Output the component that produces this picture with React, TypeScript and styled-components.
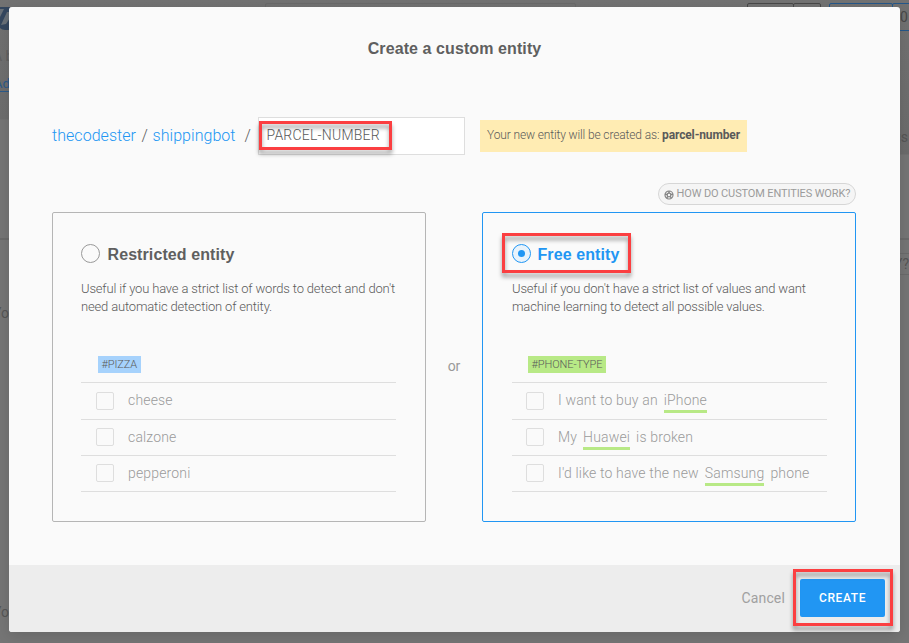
import React from "react";
import styled, { createGlobalStyle } from "styled-components";

const BLUE = "#2196f3";
const RED = "#fb3f41";

const GlobalStyle = createGlobalStyle`
  * { box-sizing: border-box; }
  body {
    margin: 0;
    overflow: hidden;
    background: #757575;
    color: #5a5a5a;
    font-family: Roboto, "Liberation Sans", sans-serif;
    font-weight: 300;
  }
`;

const Page = styled.div`
  position: relative;
  width: 909px;
  height: 643px;
  overflow: hidden;
  background:
    linear-gradient(#727272, #6c6c6c 119px, #757575 120px) 0 0 / 9px 100% no-repeat,
    linear-gradient(#727272, #6b6b6b 154px, #757575 155px);
`;

const Behind = styled.div<{ $x: number; $y: number; $size?: number; $color?: string; $underline?: boolean }>`
  position: absolute;
  left: ${(p) => p.$x}px;
  top: ${(p) => p.$y}px;
  font-size: ${(p) => p.$size ?? 14}px;
  line-height: 14px;
  white-space: nowrap;
  font-weight: 400;
  color: ${(p) => p.$color ?? "#555"};
  border-bottom: ${(p) => (p.$underline ? "1px solid #2b5a8a" : "0")};
`;

const BehindBox = styled.div<{ $x: number; $y: number; $w: number; $h: number; $color: string; $r?: number }>`
  position: absolute;
  left: ${(p) => p.$x}px;
  top: ${(p) => p.$y}px;
  width: ${(p) => p.$w}px;
  height: ${(p) => p.$h}px;
  border: 1px solid ${(p) => p.$color};
  border-radius: ${(p) => p.$r ?? 2}px;
`;

const Avatar = styled.svg`
  position: absolute;
  left: 0;
  top: 7px;
  width: 10px;
  height: 23px;
`;

const Dialog = styled.main`
  position: absolute;
  left: 9px;
  top: 7px;
  width: 891px;
  height: 625px;
  display: flex;
  flex-direction: column;
  background: #fafafa;
  border-radius: 3px;
  box-shadow: 0 4px 14px rgba(0, 0, 0, 0.12);
  overflow: hidden;
`;

const Title = styled.h1`
  margin: 32px 0 0;
  font: bold 16px/20px "Liberation Sans", Arial, sans-serif;
  letter-spacing: 0.09px;
  text-align: center;
  color: #5f5f5f;
`;

const NameRow = styled.div`
  display: flex;
  align-items: center;
  margin: 58px 0 0 43px;
  height: 38px;
`;

const Crumb = styled.a<{ $w: number }>`
  width: ${(p) => p.$w}px;
  font-size: 16px;
  line-height: 20px;
  letter-spacing: 0.05px;
  color: ${BLUE};
  white-space: nowrap;
`;

const Slash = styled.span<{ $w: number }>`
  width: ${(p) => p.$w}px;
  font-size: 16px;
  line-height: 20px;
`;

const NameField = styled.div`
  width: 207px;
  height: 38px;
  padding: 8px 7.5px;
  border: 1px solid #dedede;
  background: #fff;
  font-size: 14px;
  line-height: 18px;
  letter-spacing: 0.22px;
`;

const Highlight = styled.div<{ $x: number; $y: number; $w: number; $h: number }>`
  position: absolute;
  left: ${(p) => p.$x}px;
  top: ${(p) => p.$y}px;
  width: ${(p) => p.$w}px;
  height: ${(p) => p.$h}px;
  border: 3px solid ${RED};
  pointer-events: none;
  filter: drop-shadow(0 4px 2px rgba(0, 0, 0, 0.38));
`;

const Notice = styled.div`
  width: 267px;
  height: 32px;
  margin-left: 15px;
  padding-left: 7px;
  background: #ffecb3;
  font-size: 12px;
  line-height: 30px;
  letter-spacing: -0.135px;
  white-space: nowrap;
  b { font-weight: 700; }
`;

const HelpRow = styled.div`
  display: flex;
  justify-content: flex-end;
  margin: 28px 44px 7px 0;
`;

const HelpButton = styled.div`
  display: flex;
  align-items: center;
  gap: 2.5px;
  width: 198px;
  height: 22px;
  padding: 0 0 1px 5px;
  border: 1px solid #d6d6d6;
  border-radius: 11px;
  background: #f5f5f5;
  color: #9b9b9b;
  font-size: 11px;
  font-weight: 400;
  letter-spacing: -0.12px;
  white-space: nowrap;
  svg { flex: none; margin-top: 2px; }
`;

const Choices = styled.div`
  display: grid;
  grid-template-columns: 374px 56px 374px;
  margin-left: 43px;
  height: 310px;
`;

const Or = styled.div`
  align-self: center;
  padding-bottom: 2px;
  text-align: center;
  font-size: 14px;
  line-height: 18px;
  font-weight: 400;
  color: #999;
`;

const Card = styled.section<{ $active?: boolean }>`
  padding: ${(p) => (p.$active ? "31px 28px 0 29px" : "31px 29px 0 28px")};
  border: 1px solid ${(p) => (p.$active ? BLUE : "#b5b5b5")};
  border-radius: 2px;
`;

const CardHead = styled.div<{ $active?: boolean }>`
  display: flex;
  align-items: center;
  gap: ${(p) => (p.$active ? 6.5 : 7.5)}px;
  height: 20px;
  font: bold 16px/20px "Liberation Sans", Arial, sans-serif;
  letter-spacing: 0.09px;
  color: ${(p) => (p.$active ? BLUE : "#5f5f5f")};
`;

const CardLabel = styled.span`
  padding-top: 2px;
`;

const Radio = styled.span<{ $active?: boolean }>`
  display: grid;
  place-items: center;
  width: 19px;
  height: 19px;
  margin-bottom: 1px;
  border: 1px solid ${(p) => (p.$active ? BLUE : "#999")};
  border-radius: 50%;
  background: ${(p) => (p.$active ? "#e8f3fc" : "#fafafa")};
  &::after {
    content: "";
    width: 7px;
    height: 7px;
    border-radius: 50%;
    background: ${(p) => (p.$active ? BLUE : "transparent")};
  }
`;

const Blurb = styled.p`
  margin: 16px 0 0;
  height: 36px;
  font-size: 13px;
  line-height: 18px;
  letter-spacing: -0.165px;
  white-space: nowrap;
`;

const Tag = styled.div<{ $color: string; $w: number; $indent: number }>`
  width: ${(p) => p.$w}px;
  height: 17px;
  margin: 40px 0 9px ${(p) => p.$indent}px;
  padding-left: 3.5px;
  background: ${(p) => p.$color};
  font-size: 11px;
  line-height: 17px;
  letter-spacing: -0.1px;
  white-space: nowrap;
`;

const List = styled.ul`
  margin: 0;
  padding: 0;
  list-style: none;
  border-top: 1px solid #dedede;
`;

const Item = styled.li<{ $indent: number }>`
  display: flex;
  align-items: center;
  height: 36px;
  padding: 0 0 1px ${(p) => p.$indent}px;
  border-bottom: 1px solid #dedede;
  color: #9b9b9b;
  font-size: 14px;
  line-height: 18px;
  letter-spacing: 0.16px;
  white-space: pre;
  &:first-child { height: 37px; }
`;

const Check = styled.span`
  width: 18px;
  height: 18px;
  margin-right: 14px;
  border: 1px solid #dedede;
  border-radius: 2px;
`;

const ItemText = styled.span`
  display: flex;
  align-items: center;
  padding-bottom: 1px;
`;

const Value = styled.span`
  margin: 4px 6px 0;
  padding-bottom: 1px;
  border-bottom: 3px solid #b8e986;
`;

const Footer = styled.footer`
  display: flex;
  align-items: center;
  justify-content: flex-end;
  height: 67px;
  margin-top: auto;
  padding: 0 15px 2px 0;
  background: #ededed;
`;

const Cancel = styled.span`
  margin-right: 15px;
  color: #a0a0a0;
  font-size: 14px;
  font-weight: 400;
  letter-spacing: 0.15px;
`;

const Create = styled.div`
  display: grid;
  place-items: center;
  width: 85px;
  height: 38px;
  border-radius: 2px;
  background: ${BLUE};
  color: #fff;
  font-size: 12px;
  font-weight: 500;
  letter-spacing: 0.6px;
`;

const restricted = ["cheese", "calzone", "pepperoni"];
const free = [
  ["I want to buy an", "iPhone", ""],
  ["My", "Huawei", "is broken"],
  ["I'd like to have the new", "Samsung", "phone"],
];

export default function App() {
  return (
    <>
      <GlobalStyle />
      <Page>
        <Avatar viewBox="0 0 10 23">
          <path d="M0 0h10v23H5Q2 23 0 21z" fill="#34475f" />
          <path d="M0 2h4L0 10zM1 18l6-13h3v6L6 17z" fill="#687078" />
        </Avatar>
        <Behind $x={-7} $y={49} $color="#5f5f5f">A b</Behind>
        <Behind $x={-6} $y={77} $size={13} $color="#2b5a8a" $underline>Ads</Behind>
        <Behind $x={-7} $y={306}>You</Behind>
        <Behind $x={-7} $y={605}>You</Behind>
        <BehindBox $x={-2} $y={238} $w={12} $h={1} $color="#6a6a6a" $r={0} />
        <BehindBox $x={265} $y={3} $w={311} $h={20} $color="#6a6a6a" />
        <BehindBox $x={747} $y={3} $w={47} $h={28} $color="#484848" />
        <BehindBox $x={793} $y={3} $w={28} $h={28} $color="#484848" />
        <BehindBox $x={829} $y={3} $w={64} $h={28} $color="#24578a" />
        <BehindBox $x={892} $y={3} $w={30} $h={28} $color="#24578a" />
        <Behind $x={900} $y={10} $color="#484848">0</Behind>
        <Behind $x={893} $y={130}>gs</Behind>
        <BehindBox $x={896} $y={238} $w={20} $h={1} $color="#6a6a6a" $r={0} />
        <BehindBox $x={880} $y={253} $w={40} $h={22} $color="#6a6a6a" />
        <Behind $x={894} $y={257}>Y?</Behind>

        <Dialog>
          <Title>Create a custom entity</Title>
          <NameRow>
            <Crumb $w={89.5}>thecodester</Crumb>
            <Slash $w={11}>/</Slash>
            <Crumb $w={92}>shippingbot</Crumb>
            <Slash $w={13.5}>/</Slash>
            <NameField>PARCEL-NUMBER</NameField>
            <Notice>
              Your new entity will be created as: <b>parcel-number</b>
            </Notice>
          </NameRow>
          <HelpRow>
            <HelpButton>
              <svg width="10" height="10" viewBox="0 0 10 10" fill="none" stroke="#858585">
                <circle cx="5" cy="5" r="4" strokeWidth="1.2" />
                <circle cx="5" cy="5" r="1.8" strokeWidth="1.2" />
                <path d="M5 1v2M1 4.2l2.2.4M9 4.2l-2.2.4M2.6 8.2l1.2-1.8M7.4 8.2L6.2 6.4" strokeWidth="1.5" />
              </svg>
              HOW DO CUSTOM ENTITIES WORK?
            </HelpButton>
          </HelpRow>
          <Choices>
            <Card>
              <CardHead>
                <Radio />
                <CardLabel>Restricted entity</CardLabel>
              </CardHead>
              <Blurb>
                Useful if you have a strict list of words to detect and don't
                <br />
                need automatic detection of entity.
              </Blurb>
              <Tag $color="#a6d2fc" $w={43} $indent={17}>#PIZZA</Tag>
              <List>
                {restricted.map((word) => (
                  <Item key={word} $indent={15}>
                    <Check />
                    <ItemText>{word}</ItemText>
                  </Item>
                ))}
              </List>
            </Card>
            <Or>or</Or>
            <Card $active>
              <CardHead $active>
                <Radio $active />
                <CardLabel>Free entity</CardLabel>
              </CardHead>
              <Blurb>
                Useful if you don't have a strict list of values and want
                <br />
                machine learning to detect all possible values.
              </Blurb>
              <Tag $color="#b8e986" $w={78} $indent={16}>#PHONE-TYPE</Tag>
              <List>
                {free.map(([before, value, after]) => (
                  <Item key={value} $indent={14}>
                    <Check />
                    <ItemText>
                      {before}
                      <Value>{value}</Value>
                      {after}
                    </ItemText>
                  </Item>
                ))}
              </List>
            </Card>
          </Choices>
          <Footer>
            <Cancel>Cancel</Cancel>
            <Create>CREATE</Create>
          </Footer>
        </Dialog>

        <Highlight $x={259} $y={121} $w={133} $h={29} />
        <Highlight $x={502} $y={233} $w={129} $h={40} />
        <Highlight $x={793} $y={569} $w={100} $h={57} />
      </Page>
    </>
  );
}
